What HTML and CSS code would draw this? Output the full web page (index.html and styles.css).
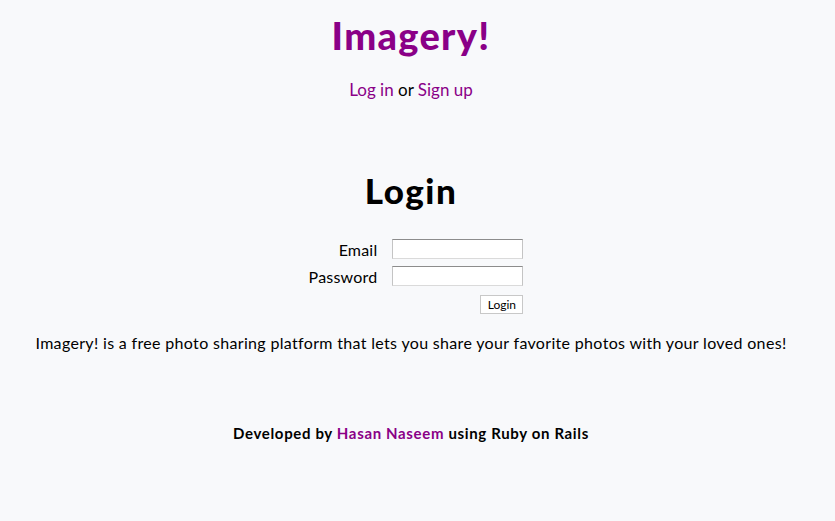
FILE: index.html
```html
<!DOCTYPE html>
<html>
<head>
<meta charset="utf-8">
<link rel="stylesheet" href="styles.css">
</head>
<body>
<header class="header">
  <h1 class="brand">Imagery!</h1>
  <nav class="nav"><a href="#">Log in</a> or <a href="#">Sign up</a></nav>
</header>
<main class="main">
  <h2 class="title">Login</h2>
  <form class="form">
    <label class="label">Email</label><input class="input" type="text">
    <label class="label">Password</label><input class="input" type="password">
    <div class="actions"><button class="btn" type="button">Login</button></div>
  </form>
  <p class="about">Imagery! is a free photo sharing platform that lets you share your favorite photos with your loved ones!</p>
</main>
<footer class="footer">Developed by <a href="#">Hasan Naseem</a> using Ruby on Rails</footer>
</body>
</html>
```
FILE: styles.css
```css
html, body { margin: 0; padding: 0; }
body {
  background: #f8f9fb;
  color: #000;
  font-family: Lato, "Open Sans", sans-serif;
  text-align: center;
  height: 521px;
  padding-right: 13px;
}
a { color: #8a0087; text-decoration: none; }
.header { padding-top: 13px; }
.brand {
  margin: 0;
  font-size: 38px;
  font-weight: 900;
  letter-spacing: 1.3px;
  color: #8a0087;
  line-height: 44px;
}
.nav { margin-top: 22px; font-size: 17px; line-height: 22px; }
.main { margin-top: 69px; }
.title { margin: 0; font-size: 35px; font-weight: 900; letter-spacing: 1.5px; line-height: 40px; }
.form {
  display: grid;
  grid-template-columns: auto 131px;
  justify-content: center;
  align-items: center;
  column-gap: 15px;
  row-gap: 7px;
  margin-top: 29px;
  padding-left: 10px;
}
.label { text-align: right; font-size: 16px; letter-spacing: 0.2px; }
.input {
  width: 131px;
  height: 20px;
  box-sizing: border-box;
  border: 1px solid #c4c4c4;
  border-top-color: #8c8c8c;
  border-bottom-color: #dadada;
  background: #fff;
  margin: 0;
}
.actions { grid-column: 2; display: flex; justify-content: flex-end; margin-top: 2px; }
.btn {
  font-family: Lato, sans-serif;
  font-size: 12px;
  width: 43px;
  height: 19px;
  padding: 0;
  background: #fff;
  border: 1px solid #c8c8c8;
}
.about { margin: 18px 0 0; font-size: 16px; letter-spacing: 0.33px; line-height: 22px; }
.footer { margin-top: 70px; font-size: 15px; font-weight: 700; letter-spacing: 0.65px; }
```
